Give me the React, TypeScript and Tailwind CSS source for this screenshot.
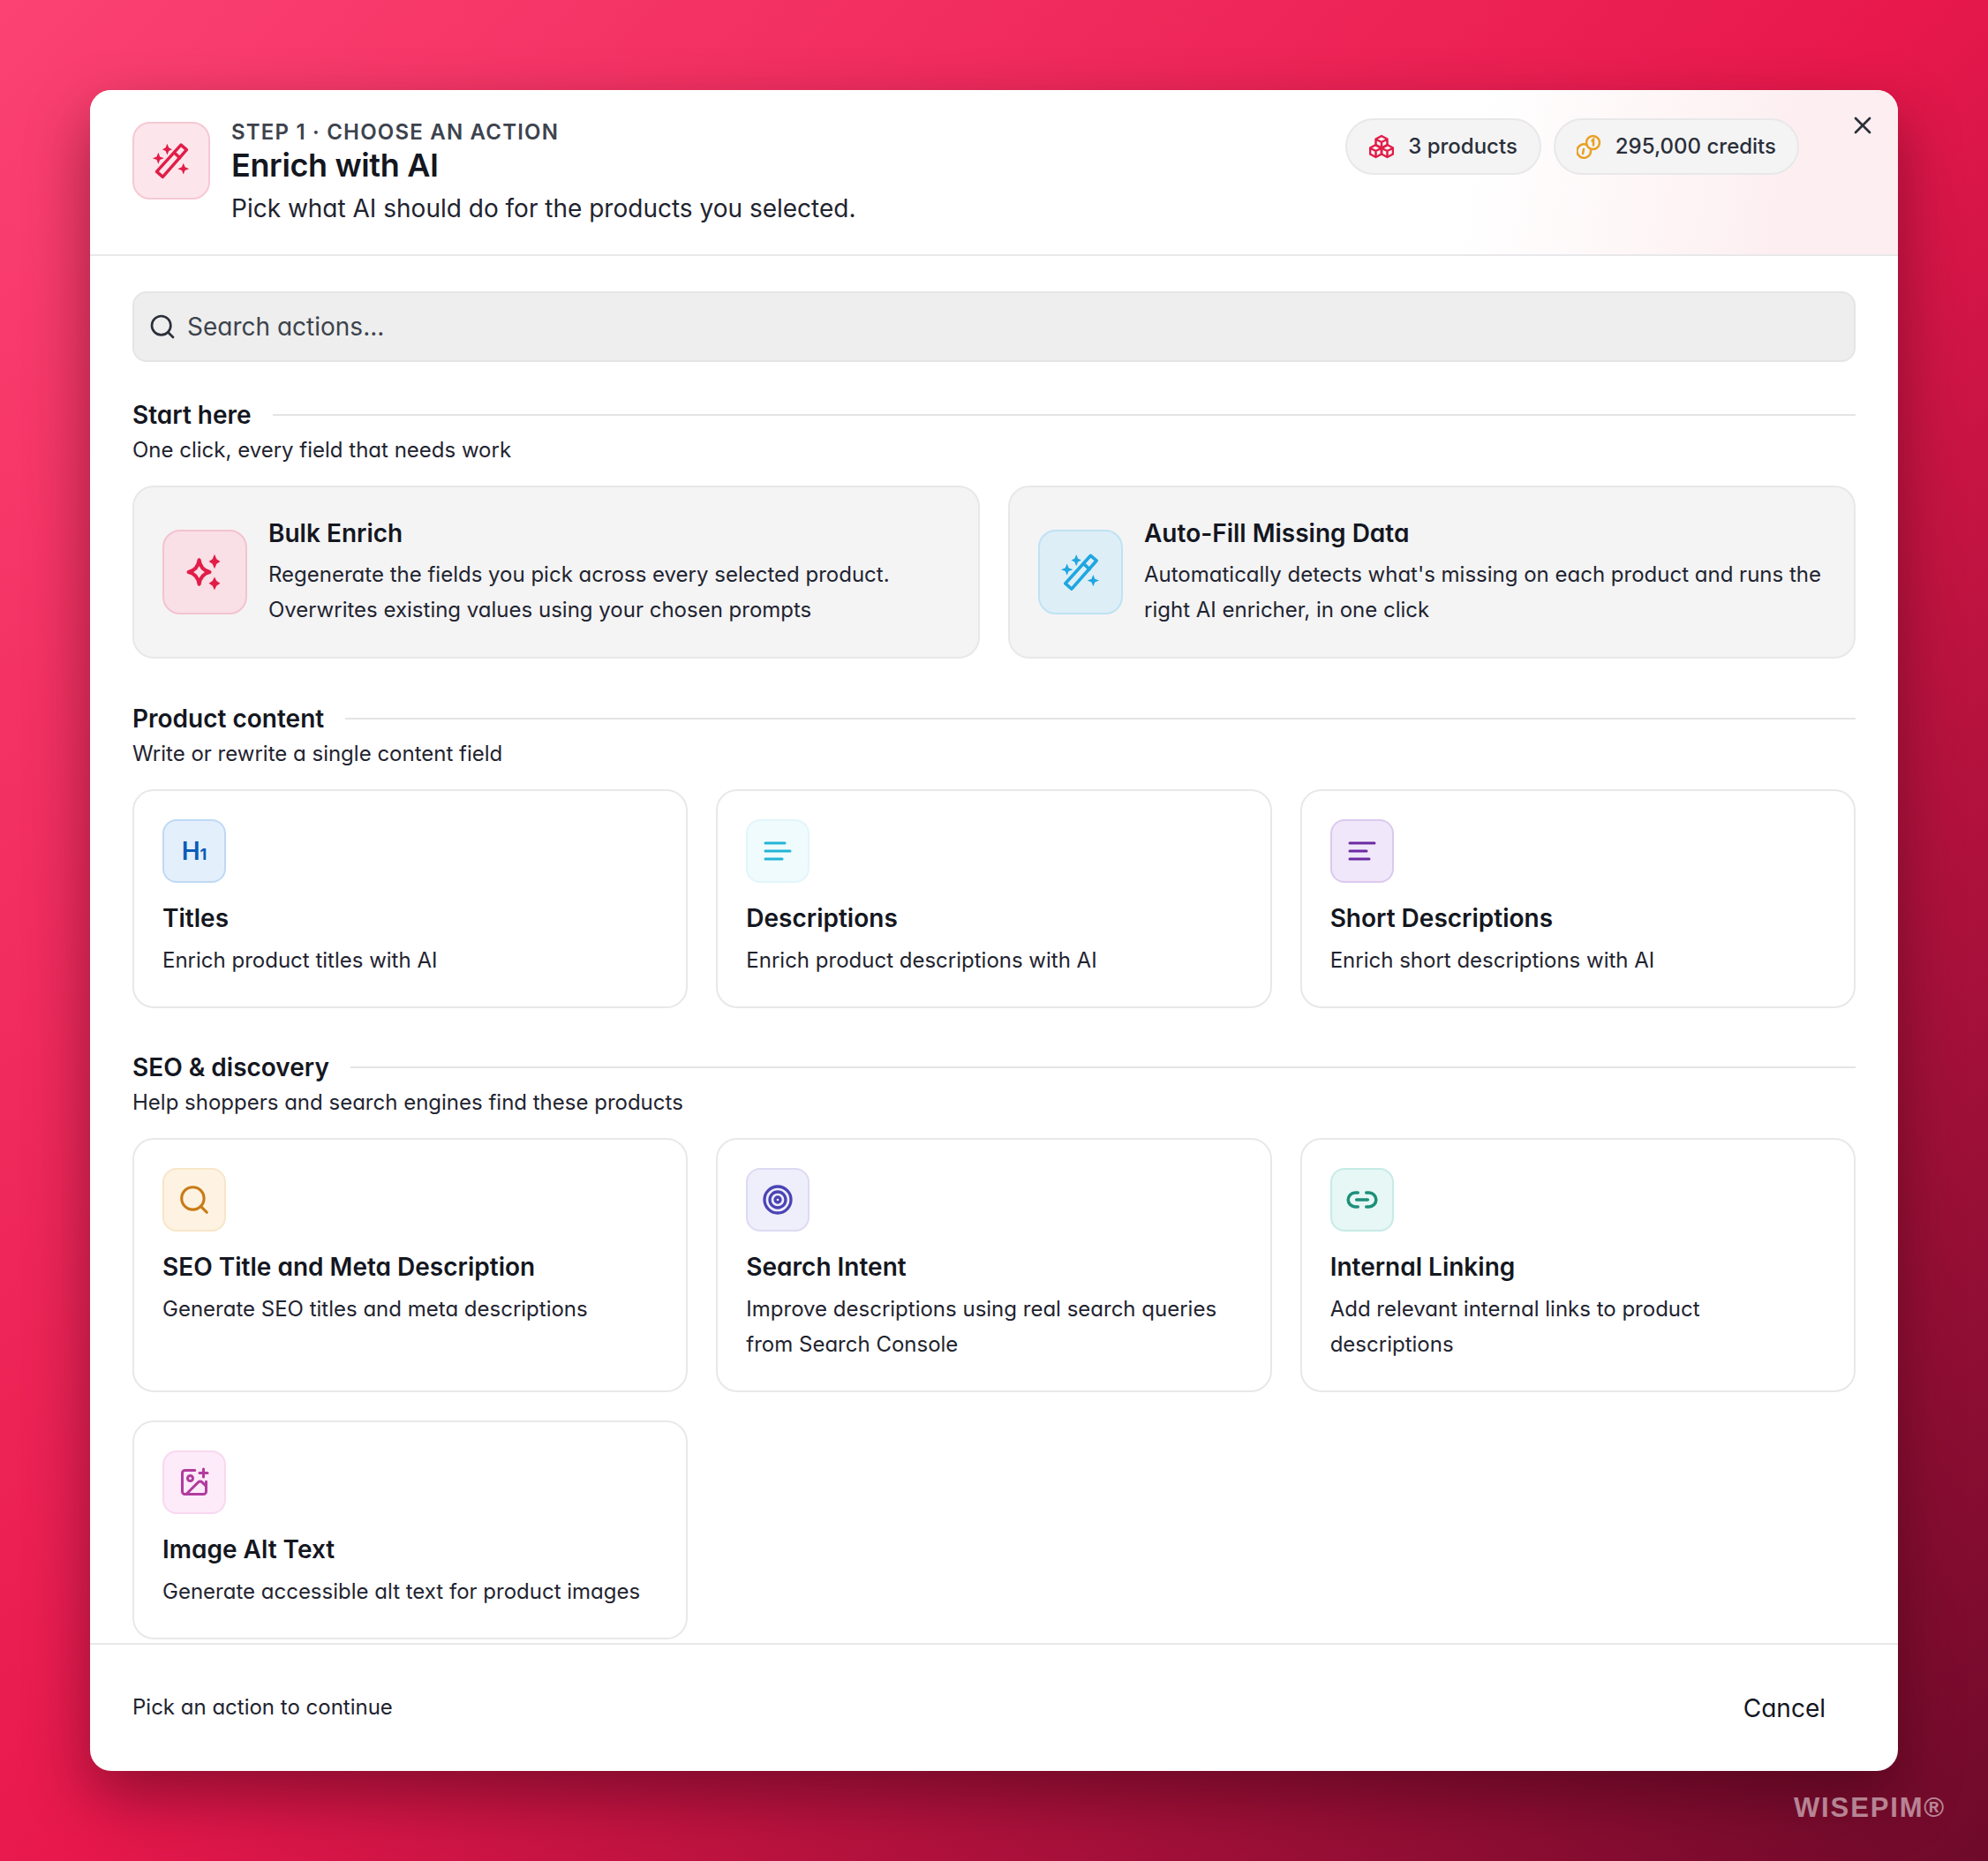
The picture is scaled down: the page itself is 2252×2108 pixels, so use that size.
import React from "react";
import { Search, X, Target, Link2, ImagePlus } from "lucide-react";

function Wand({ className }: { className?: string }) {
  return (
    <svg viewBox="0 0 48 48" className={className} fill="none">
      <g stroke="currentColor" strokeWidth="3.800" strokeLinejoin="round" strokeLinecap="round">
        <path d="M36 4.500 43 10.500 13.500 44 6 37.500Z" />
        <path d="M27.500 14 34.500 20.500" />
      </g>
      <g fill="currentColor">
        <path d="M19 3 21 8 25 10 21 12 19 17 17 12 13 10 17 8Z" />
        <path d="M8 14 10 19 15 21 10 23 8 28 6 23 1 21 6 19Z" />
        <path d="M39 27 41 32 46 34 41 36 39 41 37 36 32 34 37 32Z" />
      </g>
    </svg>
  );
}

function Sparkles3({ className }: { className?: string }) {
  return (
    <svg viewBox="0 0 48 48" className={className} fill="none">
      <path d="M17 9C18 17 22 22 30 24 22 26 18 31 17 39 16 31 12 26 4 24 12 22 16 17 17 9Z" stroke="currentColor" strokeWidth="4.500" strokeLinejoin="round" />
      <path d="M36 2 38.500 8 43 11 38.500 14 36 20 33.500 14 29 11 33.500 8Z" fill="currentColor" />
      <path d="M36 30 38.500 35 43 38 38.500 41 36 46 33.500 41 29 38 33.500 35Z" fill="currentColor" />
    </svg>
  );
}

function Lines({ widths, className }: { widths: number[]; className?: string }) {
  return (
    <svg viewBox="0 0 32 24" className={className} fill="none" stroke="currentColor" strokeWidth="3" strokeLinecap="round">
      {widths.map((w, i) => (
        <line key={i} x1="2" x2={2 + w} y1={3 + i * 9} y2={3 + i * 9} />
      ))}
    </svg>
  );
}

function Cubes({ className }: { className?: string }) {
  const hex = (x: number, y: number) =>
    `M${x} ${y - 7}L${x + 6.5} ${y - 3.5}V${y + 3.5}L${x} ${y + 7}L${x - 6.5} ${y + 3.5}V${y - 3.5}Z M${x - 6} ${y - 3}L${x} ${y}L${x + 6} ${y - 3} M${x} ${y}V${y + 6}`;
  return (
    <svg viewBox="0 0 28 28" className={className} fill="none" stroke="currentColor" strokeWidth="2.500" strokeLinejoin="round">
      <path d={hex(14, 9)} />
      <path d={hex(7.5, 19)} />
      <path d={hex(20.5, 19)} />
    </svg>
  );
}

function Coins({ className }: { className?: string }) {
  return (
    <svg viewBox="0 0 28 28" className={className} fill="none" stroke="currentColor" strokeWidth="2.500" strokeLinecap="round">
      <circle cx="18.500" cy="9.500" r="7.500" />
      <path d="M17.500 7.500 19 6V12.500" />
      <path d="M11.500 12A7.800 7.800 0 1 0 16 18.500" />
      <path d="M8 17 7 22" />
    </svg>
  );
}

function IconBox({ className, children }: { className: string; children: React.ReactNode }) {
  return <div className={`flex shrink-0 items-center justify-center border-2 ${className}`}>{children}</div>;
}

function SectionHead({ title, sub }: { title: string; sub: string }) {
  return (
    <div>
      <div className="flex items-center gap-6">
        <h2 className="text-[28px] leading-[40px] font-semibold text-[#14171f]">{title}</h2>
        <div className="h-[2px] flex-1 bg-[#e4e4e7]" />
      </div>
      <p className="text-[24px] leading-[40px] text-[#1f2430]">{sub}</p>
    </div>
  );
}

function FeatureCard({ icon, title, lines }: { icon: React.ReactNode; title: string; lines: string[] }) {
  return (
    <div className="flex items-center gap-[24px] rounded-[24px] border-2 border-[#e8e8ea] bg-[#f4f4f5] p-[32px] pb-[33px]">
      {icon}
      <div>
        <h3 className="text-[28px] leading-[40px] font-semibold text-[#14171f]">{title}</h3>
        <p className="mt-[7px] text-[24px] leading-[40px] text-[#1f2430]">
          {lines[0]}
          <br />
          {lines[1]}
        </p>
      </div>
    </div>
  );
}

function ActionCard({ icon, title, lines }: { icon: React.ReactNode; title: string; lines: string[] }) {
  return (
    <div className="rounded-[24px] border-2 border-[#e8e8ea] bg-white p-[32px]">
      {icon}
      <h3 className="mt-[20px] text-[28px] leading-[40px] font-semibold text-[#14171f]">{title}</h3>
      <p className="mt-[8px] text-[24px] leading-[40px] text-[#1f2430]">
        {lines.map((l, i) => (
          <span key={i} className="block">
            {l}
          </span>
        ))}
      </p>
    </div>
  );
}

const small = "h-[72px] w-[72px] rounded-[16px]";

export default function App() {
  return (
    <div className="relative h-[2108px] w-[2252px] overflow-hidden bg-[linear-gradient(135deg,#fb4272_0%,#e8184c_50%,#6e0a2a_100%)] p-[102px] font-[Inter,sans-serif] [font-feature-settings:'cv11']">
      <div className="relative flex h-[1904px] w-[2048px] flex-col overflow-hidden rounded-[24px] bg-white shadow-[0_30px_70px_rgba(40,0,15,0.45)]">
        <header className="relative flex h-[188px] shrink-0 items-start border-b-2 border-[#e8e8ea] bg-[linear-gradient(100deg,#ffffff_76%,#fdeff1_93%)] px-[48px] pt-[31px]">
          <IconBox className="mt-[5px] h-[88px] w-[88px] rounded-[20px] border-[#f6c8d4] bg-[#fde6eb] text-[#e11d48]">
            <Wand className="h-[44px] w-[44px]" />
          </IconBox>
          <div className="ml-[24px] flex-1">
            <div className="pt-[1px] text-[24px] leading-[31px] font-semibold tracking-[0.05em] text-[#3d434d] uppercase">Step 1 · Choose an action</div>
            <h1 className="text-[36px] leading-[44px] font-semibold tracking-[-0.01em] text-[#14171f]">Enrich with AI</h1>
            <p className="mt-[7px] text-[28px] leading-[40px] text-[#1f2430]">Pick what AI should do for the products you selected.</p>
          </div>
          <div className="mt-[1px] mr-[64px] flex items-center gap-[14px]">
            <div className="flex h-[64px] items-center gap-[16px] rounded-full border-2 border-[#e8e8ea] bg-[#f4f4f5] px-[25px] text-[24px] font-medium text-[#2a2f39]">
              <Cubes className="h-[28px] w-[28px] text-[#e11d48]" />
              3 products
            </div>
            <div className="flex h-[64px] items-center gap-[16px] rounded-full border-2 border-[#e8e8ea] bg-[#f4f4f5] px-[24px] text-[24px] font-medium text-[#2a2f39]">
              <Coins className="h-[28px] w-[28px] text-[#e9a023]" />
              295,000 credits
            </div>
          </div>
          <X className="absolute top-[24px] right-[24px] h-[32px] w-[32px] text-[#2a2f39]" strokeWidth={2} />
        </header>

        <main className="flex min-h-0 flex-1 flex-col overflow-hidden px-[48px] pt-[40px]">
          <div className="flex h-[80px] shrink-0 items-center gap-[12px] rounded-[16px] border-2 border-[#e5e5e7] bg-[#eeeeee] px-[16px] text-[28px] text-[#3d434d]">
            <Search className="h-[32px] w-[32px] text-[#2a2f39]" strokeWidth={2} />
            Search actions...
          </div>

          <section className="mt-[40px]">
            <SectionHead title="Start here" sub="One click, every field that needs work" />
            <div className="mt-[20px] grid grid-cols-2 gap-[32px]">
              <FeatureCard
                icon={
                  <IconBox className="h-[96px] w-[96px] rounded-[20px] border-[#f3c3d0] bg-[#f9dfe6] text-[#e11d48]">
                    <Sparkles3 className="h-[44px] w-[44px]" />
                  </IconBox>
                }
                title="Bulk Enrich"
                lines={["Regenerate the fields you pick across every selected product.", "Overwrites existing values using your chosen prompts"]}
              />
              <FeatureCard
                icon={
                  <IconBox className="h-[96px] w-[96px] rounded-[20px] border-[#bfe2f3] bg-[#deeef7] text-[#1ea7e1]">
                    <Wand className="h-[46px] w-[46px]" />
                  </IconBox>
                }
                title="Auto-Fill Missing Data"
                lines={["Automatically detects what's missing on each product and runs the", "right AI enricher, in one click"]}
              />
            </div>
          </section>

          <section className="mt-[48px]">
            <SectionHead title="Product content" sub="Write or rewrite a single content field" />
            <div className="mt-[20px] grid grid-cols-3 gap-[32px]">
              <ActionCard
                icon={
                  <IconBox className={`${small} border-[#bfd9f5] bg-[#e3f0fc] text-[#0a5cb8]`}>
                    <span className="text-[28px] leading-none font-semibold">
                      H<span className="text-[18px] font-bold">1</span>
                    </span>
                  </IconBox>
                }
                title="Titles"
                lines={["Enrich product titles with AI"]}
              />
              <ActionCard
                icon={
                  <IconBox className={`${small} border-[#e2f6fb] bg-[#effbfd] text-[#22b5d6]`}>
                    <Lines widths={[22, 28, 19]} className="h-[24px] w-[32px]" />
                  </IconBox>
                }
                title="Descriptions"
                lines={["Enrich product descriptions with AI"]}
              />
              <ActionCard
                icon={
                  <IconBox className={`${small} border-[#dcc9ee] bg-[#f0e8fa] text-[#6b2aa3]`}>
                    <Lines widths={[28, 19, 22]} className="h-[24px] w-[32px]" />
                  </IconBox>
                }
                title="Short Descriptions"
                lines={["Enrich short descriptions with AI"]}
              />
            </div>
          </section>

          <section className="mt-[47px]">
            <SectionHead title="SEO & discovery" sub="Help shoppers and search engines find these products" />
            <div className="mt-[20px] grid grid-cols-3 gap-[32px]">
              <ActionCard
                icon={
                  <IconBox className={`${small} border-[#f8e6c8] bg-[#fef3e2] text-[#c97a16]`}>
                    <Search className="h-[38px] w-[38px]" strokeWidth={2} />
                  </IconBox>
                }
                title="SEO Title and Meta Description"
                lines={["Generate SEO titles and meta descriptions", "\u00a0"]}
              />
              <ActionCard
                icon={
                  <IconBox className={`${small} border-[#dcdaf3] bg-[#efeefb] text-[#4a44b5]`}>
                    <Target className="h-[36px] w-[36px]" strokeWidth={2.2} />
                  </IconBox>
                }
                title="Search Intent"
                lines={["Improve descriptions using real search queries", "from Search Console"]}
              />
              <ActionCard
                icon={
                  <IconBox className={`${small} border-[#c6ebe6] bg-[#e6f7f5] text-[#1c8f7a]`}>
                    <Link2 className="h-[38px] w-[38px]" strokeWidth={2.2} />
                  </IconBox>
                }
                title="Internal Linking"
                lines={["Add relevant internal links to product", "descriptions"]}
              />
              <ActionCard
                icon={
                  <IconBox className={`${small} border-[#f8d8f0] bg-[#fdebf9] text-[#b13c9e]`}>
                    <ImagePlus className="h-[36px] w-[36px]" strokeWidth={2} />
                  </IconBox>
                }
                title="Image Alt Text"
                lines={["Generate accessible alt text for product images"]}
              />
            </div>
          </section>
        </main>

        <footer className="flex h-[145px] shrink-0 items-center justify-between border-t-2 border-[#e8e8ea] px-[48px] text-[#1f2430]">
          <span className="pb-[2px] text-[24px]">Pick an action to continue</span>
          <span className="px-[34px] text-[28px] text-[#14171f]">Cancel</span>
        </footer>
      </div>
      <div className="absolute top-[2030px] left-[2032px] font-['Liberation_Sans'] text-[31px] leading-[36px] font-bold tracking-[0.06em] text-white/50">WISEPIM®</div>
    </div>
  );
}
